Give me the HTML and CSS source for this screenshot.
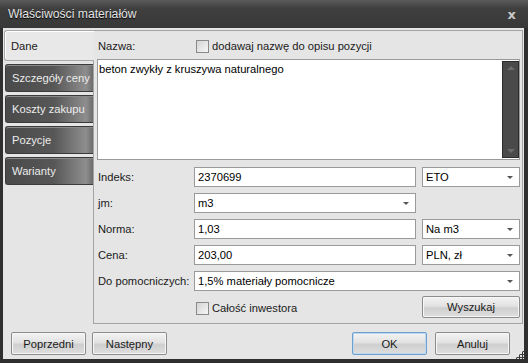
FILE: index.html
```html
<!DOCTYPE html>
<html lang="pl">
<head>
  <meta charset="UTF-8" />
  <title>Właściwości materiałów</title>
  <link rel="stylesheet" href="styles.css">
</head>
<body>

  <div class="window">
    <div class="titlebar">
      <span class="title">Właściwości materiałów</span>
      <span class="close">x</span>
    </div>

    <div class="client">
      <div class="main">
        <ul class="tabs">
          <li class="tab active">Dane</li>
          <li class="tab">Szczegóły ceny</li>
          <li class="tab">Koszty zakupu</li>
          <li class="tab">Pozycje</li>
          <li class="tab">Warianty</li>
        </ul>

        <div class="panel">
          <div class="name-row">
            <span class="label">Nazwa:</span>
            <label class="check"><span class="box"></span>dodawaj nazwę do opisu pozycji</label>
          </div>

          <div class="memo">
            <span class="memo-text">beton zwykły z kruszywa naturalnego</span>
            <div class="scrollbar">
              <span class="arrow up"></span>
              <span class="arrow down"></span>
            </div>
          </div>

          <div class="form">
            <span class="label">Indeks:</span>
            <div class="field">2370699</div>
            <div class="field select">ETO</div>

            <span class="label">jm:</span>
            <div class="field select">m3</div>
            <span></span>

            <span class="label">Norma:</span>
            <div class="field">1,03</div>
            <div class="field select">Na m3</div>

            <span class="label">Cena:</span>
            <div class="field">203,00</div>
            <div class="field select">PLN, zł</div>

            <span class="label">Do pomocniczych:</span>
            <div class="field select wide">1,5% materiały pomocnicze</div>

            <span></span>
            <label class="check"><span class="box"></span>Całość inwestora</label>
            <button class="btn">Wyszukaj</button>
          </div>
        </div>
      </div>

      <div class="footer">
        <div class="nav-buttons">
          <button class="btn">Poprzedni</button>
          <button class="btn">Następny</button>
        </div>
        <div class="nav-buttons">
          <button class="btn default">OK</button>
          <button class="btn">Anuluj</button>
        </div>
        <span class="grip"></span>
      </div>
    </div>
  </div>

</body>
</html>
```

FILE: styles.css
```css
body {
  margin: 0;
  padding: 0;
  font-family: 'Liberation Sans', Arial, sans-serif;
  font-size: 11.2px;
  color: #1a1a1a;
  background: #2f2f2f;
}

.window {
  width: 528px;
  height: 363px;
  display: flex;
  flex-direction: column;
  background: #2f2f2f;
}

.titlebar {
  height: 28px;
  display: flex;
  align-items: center;
  justify-content: space-between;
  padding: 0 12px 0 8px;
  background: linear-gradient(to bottom, #5b5b5b, #3f3f3f 30%, #383838);
}

.title {
  color: #e4e4e4;
  font-size: 12.2px;
  text-shadow: 0 1px 1px #000;
}

.close {
  color: #c8c8c8;
  font-weight: bold;
  font-size: 13px;
  font-family: 'DejaVu Sans', sans-serif;
}

.client {
  position: relative;
  flex: 1;
  margin: 0 4px 4px 3px;
  background: #e5e5e5;
  display: flex;
  flex-direction: column;
}

.main {
  display: flex;
  padding-top: 2px;
}

.tabs {
  list-style: none;
  margin: 0;
  padding: 0 0 0 1px;
  width: 89px;
  display: flex;
  flex-direction: column;
  gap: 3px;
}

.tab {
  box-sizing: border-box;
  height: 28px;
  flex: none;
  margin-left: 1px;
  padding-left: 6px;
  display: flex;
  align-items: center;
  white-space: nowrap;
  color: #ececec;
  border: 1px solid #3b3b3b;
  border-right: none;
  border-radius: 3px 0 0 3px;
  background: linear-gradient(to right, #4a4a4a, #575757 55%, #8e8e8e 92%, #6c6c6c);
  box-shadow: inset 0 1px 0 #8a8a8a;
}

.tab.active {
  height: 31px;
  margin-left: 0;
  margin-right: -1px;
  position: relative;
  z-index: 1;
  color: #1a1a1a;
  border-color: #a8a8a8;
  background: #e8e8e8;
  box-shadow: inset 1px 1px 0 #fff;
}

.panel {
  border: 1px solid #a4a4a4;
  padding: 6px 2px 0 3px;
  box-sizing: border-box;
  width: 430px;
  height: 294px;
}

.name-row {
  height: 18px;
  display: flex;
  align-items: center;
  margin-bottom: 4px;
}

.name-row .label {
  width: 97px;
}

.label {
  padding-left: 1px;
  white-space: nowrap;
}

.check {
  display: flex;
  align-items: center;
  gap: 3px;
  padding-left: 1px;
}

.box {
  width: 11px;
  height: 11px;
  border: 1px solid #8a8a8a;
  background: linear-gradient(135deg, #d4d4d4, #f6f6f6);
}

.memo {
  position: relative;
  height: 101px;
  box-sizing: border-box;
  border: 1px solid #9a9a9a;
  background: #fff;
  padding: 3px 0 0 1px;
  margin-bottom: 7px;
  color: #000;
}

.scrollbar {
  position: absolute;
  top: 1px;
  right: 0;
  width: 17px;
  height: 97px;
  box-sizing: border-box;
  border: 1px solid #2c2c2c;
  background: #4a4a4a;
  display: flex;
  flex-direction: column;
  justify-content: space-between;
  align-items: center;
  padding: 4px 0;
}

.arrow {
  width: 0;
  height: 0;
  border-left: 4px solid transparent;
  border-right: 4px solid transparent;
}

.arrow.up {
  border-bottom: 4px solid #6c6c6c;
}

.arrow.down {
  border-top: 4px solid #6c6c6c;
}

.form {
  display: grid;
  grid-template-columns: 91px 222px 98px;
  grid-template-rows: repeat(5, 20px) 22px;
  column-gap: 6px;
  row-gap: 6px;
  align-items: center;
}

.form .check {
  padding-left: 2px;
}

.form .btn {
  width: 98px;
  height: 22px;
  margin-top: -2px;
}

.field {
  position: relative;
  height: 20px;
  box-sizing: border-box;
  border: 1px solid #9a9a9a;
  background: #fff;
  padding: 0 3px;
  display: flex;
  align-items: center;
  color: #000;
}

.field.select::after {
  content: "";
  position: absolute;
  right: 6px;
  top: 8px;
  border-left: 3px solid transparent;
  border-right: 3px solid transparent;
  border-top: 3px solid #555;
}

.field.wide {
  grid-column: 2 / 4;
}

.btn {
  font-family: inherit;
  font-size: 11.2px;
  color: #1a1a1a;
  height: 23px;
  width: 75px;
  border: 1px solid #8c8c8c;
  border-radius: 2px;
  background: linear-gradient(to bottom, #f3f3f3, #e2e2e2 45%, #cfcfcf 55%, #dedede);
  box-shadow: inset 0 0 0 1px #f6f6f6;
  padding: 0;
}

.btn.default {
  border-color: #6f9fcf;
  box-shadow: inset 0 0 0 1px #bcd8f0;
}

.footer {
  display: flex;
  justify-content: space-between;
  padding: 8px 14px 0 8px;
}

.nav-buttons {
  display: flex;
  gap: 6px;
}

.nav-buttons + .nav-buttons {
  gap: 8px;
}

.grip {
  position: absolute;
  right: 0;
  bottom: 0;
  width: 9px;
  height: 9px;
  background:
    radial-gradient(circle, #3a3a3a 1px, transparent 1.2px) 0 0 / 3px 3px;
  clip-path: polygon(100% 0, 100% 100%, 0 100%);
}
```
